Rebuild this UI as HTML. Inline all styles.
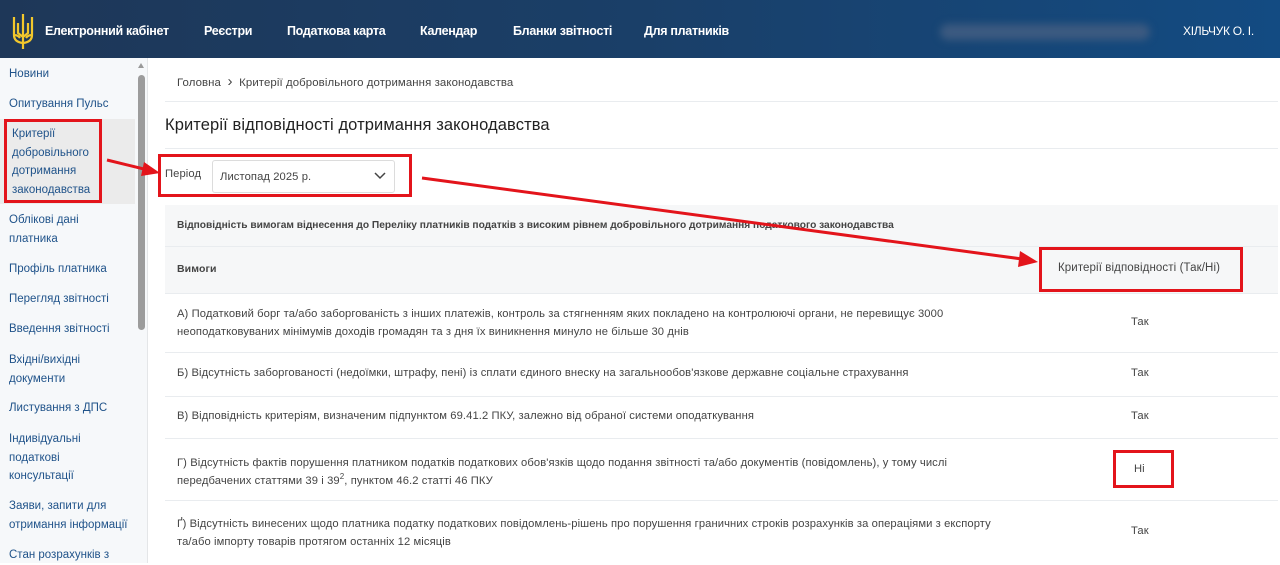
<!DOCTYPE html>
<html><head><meta charset="utf-8"><style>
*{margin:0;padding:0;box-sizing:border-box}
body{width:1280px;height:563px;overflow:hidden;background:#fff;font-family:"Liberation Sans","Noto Sans CJK SC",sans-serif;position:relative;color:#333}
.hdr{position:absolute;left:0;top:0;width:1280px;height:58px;background:linear-gradient(90deg,#1e3758 0%,#1a3f68 50%,#134b82 100%)}
.hdr span{position:absolute;top:24px;color:#fff;font-weight:bold;font-size:12.5px;letter-spacing:-0.3px}
.blur{position:absolute;left:940px;top:24px;width:210px;height:16px;background:#3c5a80;filter:blur(4px);border-radius:8px}
.side{position:absolute;left:0;top:58px;width:148px;height:505px;background:#f6f8fa;border-right:1px solid #e4e6e8}
.side div{position:absolute;left:9px;font-size:11.5px;color:#20538a;line-height:18.5px}
.hl{position:absolute;left:0;top:61px;width:135px;height:85px;background:#ebebeb}
.sb{position:absolute;left:138px;top:75px;width:7px;height:255px;background:#9c9c9c;border-radius:4px}
.c{position:absolute;font-size:11.2px;color:#444;letter-spacing:0.1px}
.line{position:absolute;left:165px;width:1113px;height:1px;background:#e9ecef}
.red{position:absolute;border:3px solid #e3141b}
sup{font-size:8px;line-height:0;vertical-align:5px}
</style></head><body>
<div class="hdr">
<svg style="position:absolute;left:11px;top:13px" width="24" height="37" viewBox="0 0 24 37"><path d="M12 1v34M3 4v18q0 7 9 8q9-1 9-8V4M3 22q4 0 6 3M21 22q-4 0-6 3M7 10v10l5 4l5-4V10M12 30v6" stroke="#f2c72c" stroke-width="2.2" fill="none"/></svg>
<span style="left:45px">Електронний кабінет</span><span style="left:204px">Реєстри</span><span style="left:287px">Податкова карта</span><span style="left:420px">Календар</span><span style="left:513px">Бланки звітності</span><span style="left:644px">Для платників</span>
<div class="blur"></div>
<span style="left:1183px;font-weight:normal;font-size:12px">ХІЛЬЧУК О. І.</span>
</div>
<div class="side">
<div class="hl" style="left:0"></div>
<div style="top:7px">Новини</div>
<div style="top:37px">Опитування Пульс</div>
<div style="top:67px;left:12px">Критерії<br>добровільного<br>дотримання<br>законодавства</div>
<div style="top:153px">Облікові дані<br>платника</div>
<div style="top:202px">Профіль платника</div>
<div style="top:232px">Перегляд звітності</div>
<div style="top:262px">Введення звітності</div>
<div style="top:293px">Вхідні/вихідні<br>документи</div>
<div style="top:341px">Листування з ДПС</div>
<div style="top:372px">Індивідуальні<br>податкові<br>консультації</div>
<div style="top:439px">Заяви, запити для<br>отримання інформації</div>
<div style="top:488px">Стан розрахунків з</div>
</div>
<div class="sb"></div>
<div style="position:absolute;left:138px;top:63px;width:0;height:0;border-left:3.5px solid transparent;border-right:3.5px solid transparent;border-bottom:5px solid #999"></div>
<div class="c" style="left:177px;top:73px;font-size:11.4px">Головна &nbsp;<span style="font-size:15px">›</span>&nbsp; Критерії добровільного дотримання законодавства</div>
<div class="line" style="top:101px"></div>
<div class="c" style="left:165px;top:116px;font-size:16.5px;color:#222">Критерії відповідності дотримання законодавства</div>
<div class="line" style="top:148px"></div>
<div class="c" style="left:165px;top:168px">Період</div>
<div style="position:absolute;left:212px;top:160px;width:183px;height:33px;border:1px solid #dcdcdc;border-radius:3px"></div>
<div class="c" style="left:220px;top:171px">Листопад 2025 р.</div>
<svg style="position:absolute;left:374px;top:172px" width="12" height="8"><path d="M1 1l5 5l5-5" stroke="#444" stroke-width="1.5" fill="none"/></svg>
<div style="position:absolute;left:165px;top:205px;width:1113px;height:88px;background:#f6f7f8"></div>
<div class="line" style="top:246px"></div>
<div class="c" style="left:177px;top:220px;font-weight:bold;font-size:10.2px;letter-spacing:0">Відповідність вимогам віднесення до Переліку платників податків з високим рівнем добровільного дотримання податкового законодавства</div>
<div class="c" style="left:177px;top:263px;font-weight:bold;font-size:10.5px">Вимоги</div>
<div class="c" style="left:1058px;top:262px;font-size:11.5px">Критерії відповідності (Так/Ні)</div>
<div class="line" style="top:293px"></div>
<div class="c" style="left:177px;top:305px;line-height:18px">А) Податковий борг та/або заборгованість з інших платежів, контроль за стягненням яких покладено на контролюючі органи, не перевищує 3000<br>неоподатковуваних мінімумів доходів громадян та з дня їх виникнення минуло не більше 30 днів</div>
<div class="c" style="left:1131px;top:316px">Так</div>
<div class="line" style="top:352px"></div>
<div class="c" style="left:177px;top:367px">Б) Відсутність заборгованості (недоїмки, штрафу, пені) із сплати єдиного внеску на загальнообов'язкове державне соціальне страхування</div>
<div class="c" style="left:1131px;top:367px">Так</div>
<div class="line" style="top:396px"></div>
<div class="c" style="left:177px;top:410px">В) Відповідність критеріям, визначеним підпунктом 69.41.2 ПКУ, залежно від обраної системи оподаткування</div>
<div class="c" style="left:1131px;top:410px">Так</div>
<div class="line" style="top:438px"></div>
<div class="c" style="left:177px;top:454px;line-height:18px">Г) Відсутність фактів порушення платником податків податкових обов'язків щодо подання звітності та/або документів (повідомлень), у тому числі<br>передбачених статтями 39 і 39<sup>2</sup>, пунктом 46.2 статті 46 ПКУ</div>
<div class="c" style="left:1134px;top:463px">Ні</div>
<div class="line" style="top:500px"></div>
<div class="c" style="left:177px;top:515px;line-height:18px">Ґ) Відсутність винесених щодо платника податку податкових повідомлень-рішень про порушення граничних строків розрахунків за операціями з експорту<br>та/або імпорту товарів протягом останніх 12 місяців</div>
<div class="c" style="left:1131px;top:525px">Так</div>
<div class="red" style="left:4px;top:119px;width:98px;height:84px"></div>
<div class="red" style="left:158px;top:154px;width:254px;height:43px"></div>
<div class="red" style="left:1039px;top:247px;width:204px;height:45px"></div>
<div class="red" style="left:1113px;top:450px;width:61px;height:38px"></div>
<svg style="position:absolute;left:0;top:0" width="1280" height="563"><g stroke="#e3141b" stroke-width="3" fill="#e3141b"><line x1="107" y1="160" x2="148" y2="170"/><polygon points="160,173 144,162 141,176" stroke="none"/><line x1="422" y1="178" x2="1022" y2="259"/><polygon points="1038,262 1020,251 1018,267" stroke="none"/></g></svg>
</body></html>
